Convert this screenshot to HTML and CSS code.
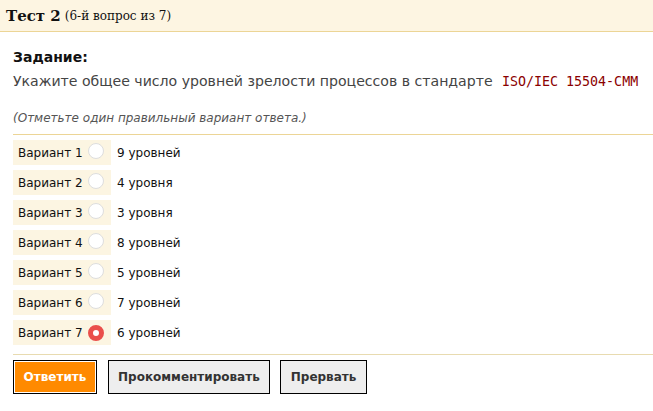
FILE: index.html
```html
<!DOCTYPE html>
<html lang="ru">
<head>
<meta charset="utf-8">
<title>Тест 2</title>
<link rel="stylesheet" href="styles.css">
</head>
<body>
<div class="header"><span class="title">Тест 2</span> <span class="subtitle">(6-й вопрос из 7)</span></div>
<div class="content">
  <div class="task-label">Задание:</div>
  <div class="task-text">Укажите общее число уровней зрелости процессов в стандарте <code class="std">ISO/IEC 15504-CMM</code></div>
  <div class="note">(Отметьте один правильный вариант ответа.)</div>
  <div class="options">
    <div class="option"><div class="opt-label">Вариант 1 <span class="radio"></span></div><span class="opt-text">9 уровней</span></div>
    <div class="option"><div class="opt-label">Вариант 2 <span class="radio"></span></div><span class="opt-text">4 уровня</span></div>
    <div class="option"><div class="opt-label">Вариант 3 <span class="radio"></span></div><span class="opt-text">3 уровня</span></div>
    <div class="option"><div class="opt-label">Вариант 4 <span class="radio"></span></div><span class="opt-text">8 уровней</span></div>
    <div class="option"><div class="opt-label">Вариант 5 <span class="radio"></span></div><span class="opt-text">5 уровней</span></div>
    <div class="option"><div class="opt-label">Вариант 6 <span class="radio"></span></div><span class="opt-text">7 уровней</span></div>
    <div class="option"><div class="opt-label">Вариант 7 <span class="radio checked"></span></div><span class="opt-text">6 уровней</span></div>
  </div>
  <div class="buttons">
    <button class="btn btn-primary">Ответить</button>
    <button class="btn">Прокомментировать</button>
    <button class="btn btn-stop">Прервать</button>
  </div>
</div>
</body>
</html>
```
FILE: styles.css
```css
html, body {
  margin: 0;
  padding: 0;
  background: #fff;
}
body {
  font-family: "DejaVu Sans", sans-serif;
  font-size: 13px;
  color: #222;
}
.header {
  height: 32px;
  box-sizing: border-box;
  background: #fdf5e2;
  border-bottom: 1px solid #ecd596;
  padding: 0 6px;
  display: flex;
  align-items: center;
  gap: 4px;
  font-family: "DejaVu Serif", serif;
  color: #111;
}
.title {
  font-weight: bold;
  font-size: 15px;
}
.subtitle {
  font-size: 12px;
}
.content {
  padding: 16px 0 0 13px;
}
.task-label {
  font-weight: bold;
  font-size: 14px;
  line-height: 18px;
  color: #111;
}
.task-text {
  margin-top: 6px;
  font-size: 14.1px;
  line-height: 18px;
  color: #444;
}
.std {
  font-family: "DejaVu Sans Mono", monospace;
  font-size: 13.3px;
  color: #8b0000;
  margin-left: 5px;
}
.note {
  margin-top: 20px;
  font-size: 12px;
  font-style: italic;
  color: #555;
  line-height: 15px;
  padding-bottom: 8px;
  border-bottom: 1px solid #ecd596;
}
.options {
  display: flex;
  flex-direction: column;
  gap: 5px;
  padding: 5px 0 9px;
  border-bottom: 1px solid #e8dbb0;
}
.option {
  display: flex;
  align-items: center;
  gap: 6px;
  font-size: 12px;
  color: #111;
}
.opt-label {
  width: 98px;
  height: 25px;
  box-sizing: border-box;
  background: #fcf5e2;
  padding-left: 5px;
  display: flex;
  align-items: center;
  gap: 5px;
}
.radio {
  width: 16px;
  height: 16px;
  box-sizing: border-box;
  border: 1px solid #dedede;
  border-radius: 50%;
  background: #fff;
  margin-top: -3px;
}
.radio.checked {
  border: 5px solid #ea4f4b;
  margin-top: 0;
}
.buttons {
  display: flex;
  gap: 11px;
  padding-top: 5px;
}
.btn {
  height: 34px;
  box-sizing: border-box;
  border: 1px solid #000;
  background: #eee;
  color: #333;
  font-family: "DejaVu Sans", sans-serif;
  font-weight: bold;
  font-size: 12px;
  padding: 0 9px;
  border-radius: 0;
}
.btn-primary {
  background: #ff8a00;
  color: #fff;
  box-shadow: inset 0 0 0 1px #fff;
  width: 84px;
}
.btn-stop {
  margin-left: -1px;
  padding: 0 10px;
}
```
